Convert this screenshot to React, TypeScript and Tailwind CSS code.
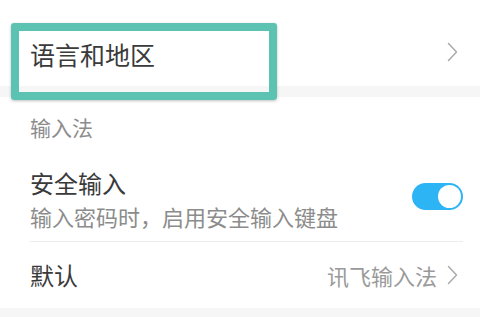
import React from "react";

const Chevron = () => (
  <svg width="11" height="20" viewBox="0 0 11 20" fill="none">
    <polyline points="1.5,1.5 9.5,10 1.5,18.5" stroke="#aaaaaa" strokeWidth="1.5" strokeLinecap="round" strokeLinejoin="round" />
  </svg>
);

export default function App() {
  return (
    <div
      className="relative w-[480px] h-[317px] overflow-hidden bg-white"
      style={{ fontFamily: '"Noto Sans CJK SC", "Noto Sans", sans-serif' }}
    >
      {/* Row 1 */}
      <div className="h-[86px] flex items-center justify-between pl-[30px] pr-[22px] pt-[18px]">
        <span className="text-[25px] leading-[30px] text-[#3a3a3a] mt-[4px]">语言和地区</span>
        <Chevron />
      </div>
      <div className="h-[11px] bg-[#f6f6f6]" />

      {/* Section header */}
      <div className="h-[60px] pl-[30px] pt-[19px]">
        <span className="block text-[21px] leading-[22px] text-[#8c8c8c]">输入法</span>
      </div>

      {/* Secure input row */}
      <div className="h-[84px] flex items-center justify-between pl-[30px] pr-[17px]">
        <div className="flex flex-col">
          <span className="text-[24px] leading-[28px] text-[#3a3a3a]">安全输入</span>
          <span className="mt-[6px] text-[22px] leading-[26px] text-[#8c8c8c]">输入密码时，启用安全输入键盘</span>
        </div>
        <div className="w-[51px] h-[27px] rounded-full bg-[#2db4f5] flex items-center justify-end pr-[2px] mb-[6px]">
          <div className="w-[23px] h-[23px] rounded-full bg-white" />
        </div>
      </div>
      <div className="ml-[30px] mr-[17px] h-px bg-[#ededed]" />

      {/* Default row */}
      <div className="h-[66px] flex items-center justify-between pl-[30px] pr-[22px]">
        <span className="text-[24px] leading-[28px] text-[#3a3a3a]">默认</span>
        <div className="flex items-center gap-[10px]">
          <span className="text-[22px] leading-[28px] text-[#9a9a9a]">讯飞输入法</span>
          <Chevron />
        </div>
      </div>
      <div className="h-[9px] bg-[#f6f6f6]" />

      {/* Highlight overlay */}
      <div className="absolute left-[11px] top-[23px] w-[266px] h-[77px] border-[8px] border-[#5cc3b3] rounded-[3px] shadow-[0_1px_3px_rgba(0,0,0,0.25)]" />
    </div>
  );
}
